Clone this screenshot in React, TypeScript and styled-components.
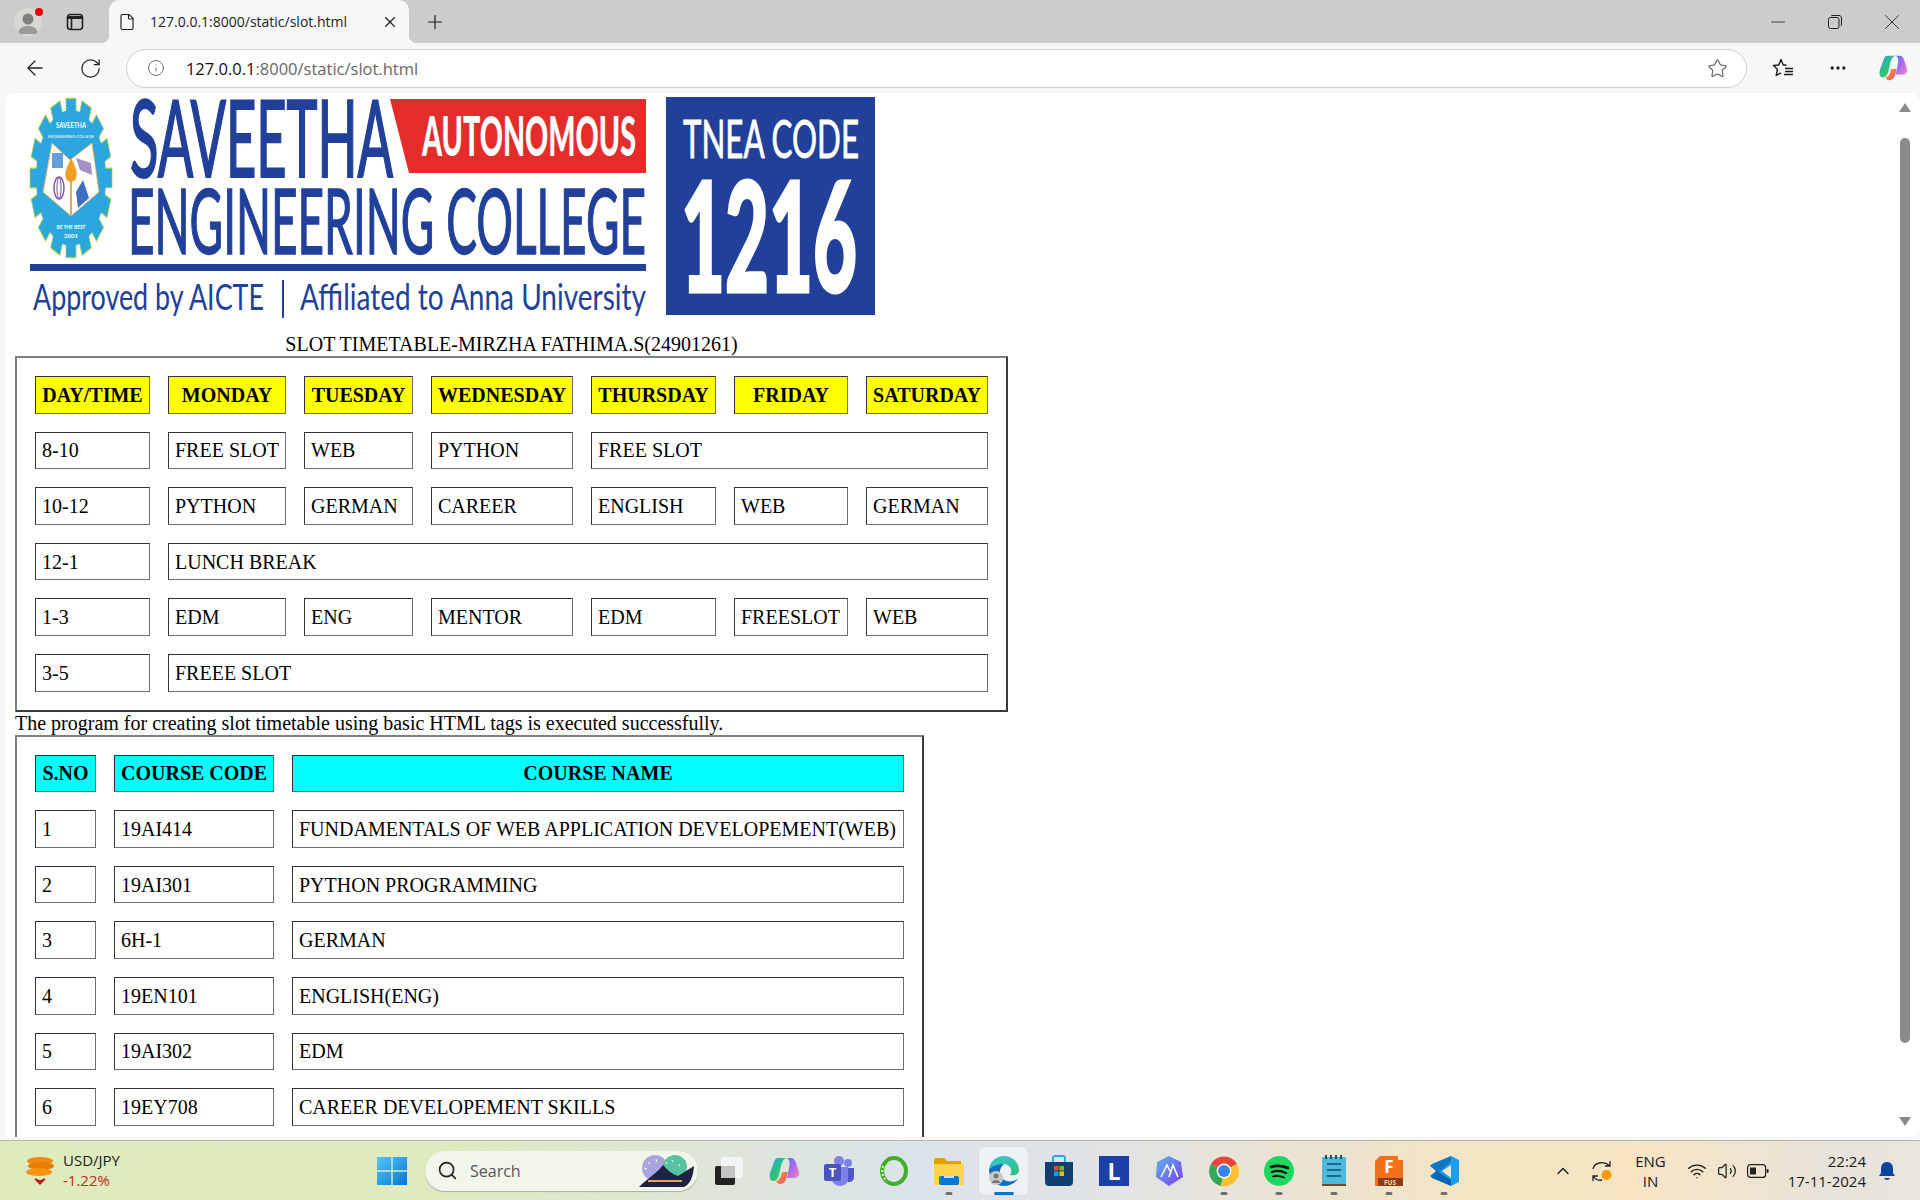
import React from 'react';
import styled, { createGlobalStyle } from 'styled-components';
import { ArrowLeft, ChevronUp, Ellipsis, File, Info, Minus, Plus, RotateCw, Search, Star, Volume2, Wifi, X } from 'lucide-react';

const GlobalStyle = createGlobalStyle`
  html, body {
    margin: 0;
    padding: 0;
    overflow: hidden;
    background: #f7f7f7;
  }
`;

const Screen = styled.div`
  display: flex;
  flex-direction: column;
  width: 1920px;
  height: 1200px;
  overflow: hidden;
  font-family: 'Open Sans', 'Noto Sans', sans-serif;
  background: #f7f7f7;
`;

const TabStrip = styled.div`
  display: flex;
  align-items: center;
  flex: none;
  height: 43px;
  padding-left: 14px;
  background: #cccccc;
  color: #1a1a1a;
`;

const Profile = styled.div`
  position: relative;
  display: flex;
  width: 28px;
  height: 28px;
  border-radius: 50%;
  overflow: hidden;
`;

const ProfileDot = styled.span`
  position: absolute;
  left: 21px;
  top: 0;
  width: 8px;
  height: 8px;
  border-radius: 50%;
  background: #e3000f;
`;

const ProfileSlot = styled.div`
  position: relative;
  width: 52px;
`;

const SidebarButton = styled.div`
  display: flex;
  width: 43px;
  color: #222;
`;

const Tab = styled.div`
  position: relative;
  display: flex;
  align-items: center;
  align-self: stretch;
  width: 300px;
  padding: 0 10px 0 9px;
  box-sizing: border-box;
  background: #f7f7f7;
  border-radius: 10px 10px 0 0;

  &::before,
  &::after {
    content: '';
    position: absolute;
    bottom: 0;
    width: 8px;
    height: 8px;
  }

  &::before {
    left: -8px;
    background: radial-gradient(circle at 0 0, #cccccc 8px, #f7f7f7 8.5px);
  }

  &::after {
    right: -8px;
    background: radial-gradient(circle at 100% 0, #cccccc 8px, #f7f7f7 8.5px);
  }
`;

const TabTitle = styled.span`
  flex: 1;
  margin-left: 14px;
  font-size: 14px;
  color: #222;
  white-space: nowrap;
`;

const NewTab = styled.div`
  display: flex;
  margin-left: 15px;
  flex: 1;
`;

const WindowControls = styled.div`
  display: flex;
  align-items: center;
  color: #222;
`;

const WindowControl = styled.div`
  display: flex;
  align-items: center;
  justify-content: center;
  width: 57px;
`;

const Toolbar = styled.div`
  display: flex;
  align-items: center;
  flex: none;
  height: 50px;
  padding-left: 23px;
  color: #222;
`;

const NavButton = styled.div`
  display: flex;
  width: 56px;
`;

const AddressBar = styled.div`
  display: flex;
  align-items: center;
  width: 1623px;
  height: 39px;
  margin-left: -9px;
  padding: 0 18px 0 20px;
  box-sizing: border-box;
  background: #fff;
  border: 1px solid #cfcfcf;
  border-radius: 20px;
`;

const Url = styled.div`
  flex: 1;
  margin-left: 21px;
  font-size: 16.5px;
  color: #666;
`;

const UrlHost = styled.span`
  color: #111;
`;

const ToolbarActions = styled.div`
  display: flex;
  align-items: center;
  padding-left: 8px;
`;

const ActionSlot = styled.div`
  display: flex;
  align-items: center;
  justify-content: center;
  width: 55px;
`;

const Viewport = styled.div`
  display: flex;
  flex: none;
  height: 1044px;
  margin-left: 5px;
  margin-bottom: 3px;
  overflow: hidden;
  background: #fff;
  border-radius: 10px 10px 10px 0;
`;

const Page = styled.div`
  flex: 1;
  padding-left: 10px;
  overflow: hidden;
  font-family: 'Liberation Serif', serif;
  font-size: 20px;
  color: #000;
`;

const Logo = styled.svg`
  display: block;
`;

const Sheet = styled.table<{ $width: number }>`
  width: ${(p) => p.$width}px;
  table-layout: fixed;
  border-collapse: separate;
  border-spacing: 18px;
  border-width: 2px;
  border-style: solid;
  border-color: #808080 #3a3a3a #3a3a3a #808080;
  box-sizing: border-box;
`;

const SheetCaption = styled.caption`
  height: 23px;
  line-height: 23px;
  white-space: nowrap;
`;

const Cell = styled.td<{ $fill?: string }>`
  height: 37.6px;
  padding: 1px 6px 0;
  box-sizing: border-box;
  border-width: 1px;
  border-style: solid;
  border-color: #333 #6e6e6e #6e6e6e #333;
  background: ${(p) => p.$fill || 'transparent'};
  line-height: 23px;
  white-space: nowrap;
`;

const HeadCell = styled(Cell).attrs({ as: 'th' })`
  font-weight: bold;
  text-align: center;
`;

const Note = styled.div`
  height: 23px;
  line-height: 23px;
`;

const Scrollbar = styled.div`
  position: relative;
  flex: none;
  width: 27px;
  background: #fff;
`;

const ScrollThumb = styled.div`
  position: absolute;
  left: 7px;
  top: 45px;
  width: 10px;
  height: 905px;
  border-radius: 5px;
  background: #8a8a8a;
`;

const ScrollArrow = styled.div<{ $down?: boolean }>`
  position: absolute;
  left: 6px;
  ${(p) => (p.$down ? 'bottom: 11px;' : 'top: 10px;')}
  width: 0;
  height: 0;
  border-left: 6px solid transparent;
  border-right: 6px solid transparent;
  ${(p) => (p.$down ? 'border-top: 9px solid #8a8a8a;' : 'border-bottom: 9px solid #8a8a8a;')}
`;

const Taskbar = styled.div`
  display: flex;
  align-items: center;
  flex: none;
  height: 60px;
  box-sizing: border-box;
  border-top: 1px solid #b5b8a8;
  background: linear-gradient(90deg, #deecbc 0%, #dfeabf 22%, #dce3ea 48%, #e1e3e4 58%, #f3e4c3 76%, #f6e4c4 86%, #e8e3da 95%, #e9e5dc 100%);
  color: #1a1a1a;
`;

const Widget = styled.div`
  display: flex;
  align-items: center;
  width: 377px;
  padding-left: 26px;
  box-sizing: border-box;
`;

const WidgetText = styled.div`
  margin-left: 9px;
  font-size: 15px;
  line-height: 20px;
  margin-top: -2px;
`;

const WidgetChange = styled.div`
  color: #c8261e;
`;

const TaskCenter = styled.div`
  display: flex;
  align-items: center;
`;

const SearchBox = styled.div`
  display: flex;
  align-items: center;
  width: 273px;
  height: 40px;
  margin-left: 18px;
  margin-right: 3px;
  padding: 0 2px 0 12px;
  box-sizing: border-box;
  background: #f2f6ea;
  border-radius: 20px;
  box-shadow: 0 1px 1px #a9ac9f;
  font-size: 16px;
  color: #555;
`;

const SearchLabel = styled.span`
  flex: 1;
  margin-left: 12px;
`;

const TaskTile = styled.div<{ $active?: boolean }>`
  position: relative;
  display: flex;
  align-items: center;
  justify-content: center;
  width: 49px;
  height: 48px;
  margin: 0 3px;
  border-radius: 5px;
  background: ${(p) => (p.$active ? '#edf1f3' : 'transparent')};
  box-shadow: ${(p) => (p.$active ? '0 0 1px #bbb' : 'none')};
`;

const RunDot = styled.span<{ $active?: boolean }>`
  position: absolute;
  left: 50%;
  bottom: 0;
  width: ${(p) => (p.$active ? '20px' : '7px')};
  height: 3px;
  transform: translateX(-50%);
  border-radius: 2px;
  background: ${(p) => (p.$active ? '#0a73d1' : '#6f6f6f')};
`;

const Tray = styled.div`
  display: flex;
  align-items: center;
  margin-left: auto;
  padding-right: 24px;
`;

const TraySpacer = styled.span`
  width: 18px;
`;

const TrayLang = styled.div`
  margin: 0 21px 0 20px;
  font-size: 15px;
  line-height: 20px;
  text-align: center;
`;

const TrayIcons = styled.div`
  display: flex;
  align-items: center;
  gap: 10px;
`;

const Clock = styled.div`
  margin: 0 12px 0 19px;
  font-size: 15px;
  line-height: 20px;
  text-align: right;
`;

const slotRows: { text: string; span?: number }[][] = [
  [{ text: '8-10' }, { text: 'FREE SLOT' }, { text: 'WEB' }, { text: 'PYTHON' }, { text: 'FREE SLOT', span: 3 }],
  [{ text: '10-12' }, { text: 'PYTHON' }, { text: 'GERMAN' }, { text: 'CAREER' }, { text: 'ENGLISH' }, { text: 'WEB' }, { text: 'GERMAN' }],
  [{ text: '12-1' }, { text: 'LUNCH BREAK', span: 6 }],
  [{ text: '1-3' }, { text: 'EDM' }, { text: 'ENG' }, { text: 'MENTOR' }, { text: 'EDM' }, { text: 'FREESLOT' }, { text: 'WEB' }],
  [{ text: '3-5' }, { text: 'FREEE SLOT', span: 6 }],
];

const slotHead = ['DAY/TIME', 'MONDAY', 'TUESDAY', 'WEDNESDAY', 'THURSDAY', 'FRIDAY', 'SATURDAY'];
const slotCols = [115, 118, 109, 142, 125, 114, 122];

const courseHead = ['S.NO', 'COURSE CODE', 'COURSE NAME'];
const courseCols = [61, 160, 612];
const courses = [
  ['1', '19AI414', 'FUNDAMENTALS OF WEB APPLICATION DEVELOPEMENT(WEB)'],
  ['2', '19AI301', 'PYTHON PROGRAMMING'],
  ['3', '6H-1', 'GERMAN'],
  ['4', '19EN101', 'ENGLISH(ENG)'],
  ['5', '19AI302', 'EDM'],
  ['6', '19EY708', 'CAREER DEVELOPEMENT SKILLS'],
];

const blue = '#21409a';

// The logo lettering is tall and condensed, so each line is stretched upwards from a font size that fits its width.
type LogoTextProps = { x: number; y: number; w: number; size: number; stretch: number; fill: string; weight?: number; bold?: number; children: string };

const LogoText = ({ x, y, w, size, stretch, fill, weight = 400, bold = 0, children }: LogoTextProps) => (
  <text
    transform={`translate(${x} ${y}) scale(1 ${stretch})`}
    fontSize={size}
    fontWeight={weight}
    fill={fill}
    stroke={bold ? fill : 'none'}
    strokeWidth={bold}
    textLength={w}
    lengthAdjust="spacingAndGlyphs"
  >
    {children}
  </text>
);

const Emblem = () => {
  const teeth = Array.from({ length: 16 }, (_, i) => (i * 360) / 16);
  return (
    <g>
      <g transform="translate(71 178) scale(1 1.94)">
        {teeth.map((a) => (
          <rect key={a} x={-5} y={-41} width={10} height={12} fill="#2ba6de" stroke="#a9cf45" strokeWidth={0.7} transform={`rotate(${a})`} />
        ))}
        <circle r={35} fill="#2ba6de" />
      </g>
      <polygon points="52,143 70,160 92,143 99,192 71,216 43,192" fill="#fff" stroke="#f2a93b" strokeWidth={0.8} />
      <rect x={52} y={153} width={11} height={15} fill="#3f86d2" opacity={0.8} />
      <ellipse cx={59} cy={188} rx={5} ry={11} fill="none" stroke="#7c4fa8" strokeWidth={1.4} />
      <ellipse cx={59} cy={188} rx={2} ry={11} fill="none" stroke="#7c4fa8" strokeWidth={1} />
      <polygon points="76,158 91,163 92,175 80,170" fill="#8a76b8" opacity={0.8} />
      <polygon points="83,180 89,198 78,208 76,192" fill="#3f6fc0" />
      <rect x={70} y={180} width={2} height={36} fill="#d8b24a" />
      <path d="M71 158 C76 168 78 172 76 178 C75 183 67 183 66 178 C64 172 67 168 71 158 Z" fill="#f29f1f" />
      <text x={71} y={128} textAnchor="middle" fontSize={7} fontWeight={700} fill="#fff" textLength={30} lengthAdjust="spacingAndGlyphs">SAVEETHA</text>
      <text x={71} y={138} textAnchor="middle" fontSize={4.5} fill="#fff" textLength={46} lengthAdjust="spacingAndGlyphs">ENGINEERING COLLEGE</text>
      <text x={71} y={229} textAnchor="middle" fontSize={6} fontWeight={700} fill="#fff" textLength={29} lengthAdjust="spacingAndGlyphs">BE THE BEST</text>
      <text x={71} y={238} textAnchor="middle" fontSize={6} fontWeight={700} fill="#fff">2001</text>
    </g>
  );
};

const CollegeLogo = () => (
  <Logo width={880} height={240} viewBox="15 93 880 240" fontFamily="Lato, sans-serif">
    <Emblem />
    <polygon points="390,99 646,99 646,173 409,173" fill="#e42d2a" />
    <LogoText x={130} y={177} w={263} size={50} stretch={2.15} fill={blue} bold={1}>SAVEETHA</LogoText>
    <LogoText x={422} y={156} w={214} size={29} stretch={1.87} fill="#fff" weight={900}>AUTONOMOUS</LogoText>
    <LogoText x={128} y={254} w={518} size={41} stretch={2.2} fill={blue} bold={0.7}>ENGINEERING COLLEGE</LogoText>
    <rect x={30} y={264} width={616} height={7} fill={blue} />
    <LogoText x={33} y={310} w={231} size={26} stretch={1.44} fill={blue}>Approved by AICTE</LogoText>
    <rect x={282} y={280} width={2} height={38} fill={blue} />
    <LogoText x={300} y={310} w={346} size={25} stretch={1.5} fill={blue}>Affiliated to Anna University</LogoText>
    <rect x={666} y={97} width={209} height={218} fill={blue} />
    <LogoText x={683} y={158} w={176} size={30} stretch={1.76} fill="#fff" bold={0.5}>TNEA CODE</LogoText>
    <LogoText x={681} y={292} w={176} size={74} stretch={2.05} fill="#fff" weight={900} bold={1.5}>1216</LogoText>
  </Logo>
);

const CopilotIcon = ({ size, id }: { size: number; id: string }) => (
  <svg width={size} height={size} viewBox="0 0 32 32">
    <defs>
      <linearGradient id={`${id}a`} x1="0" y1="0" x2="1" y2="1">
        <stop offset="0" stopColor="#1fa5ee" />
        <stop offset="0.6" stopColor="#35c56a" />
        <stop offset="1" stopColor="#f4d135" />
      </linearGradient>
      <linearGradient id={`${id}b`} x1="0" y1="0" x2="1" y2="1">
        <stop offset="0" stopColor="#4a7bf0" />
        <stop offset="0.5" stopColor="#b46be8" />
        <stop offset="1" stopColor="#f08ac0" />
      </linearGradient>
      <linearGradient id={`${id}c`} x1="0" y1="0" x2="1" y2="1">
        <stop offset="0" stopColor="#f7a03c" />
        <stop offset="1" stopColor="#ee4d5f" />
      </linearGradient>
    </defs>
    <path d="M10 3 H19 C15 4 14 7 13 11 L11 20 C10 24 8 26 5 26 C2 26 1 22 2 18 L6 7 C7 4 8 3 10 3 Z" fill={`url(#${id}a)`} />
    <path d="M19 3 H23 C26 3 27 5 28 8 L31 17 C32 21 29 23 26 23 H19 L21 13 C22 8 22 5 19 3 Z" fill={`url(#${id}b)`} />
    <path d="M12 29 C10 29 9 28 8 26 C10 26 12 24 13 21 L14 17 H20 L18 24 C17 27 15 29 12 29 Z" fill={`url(#${id}c)`} />
  </svg>
);

const SidebarIcon = () => (
  <svg width={18} height={18} viewBox="0 0 18 18" fill="none" stroke="currentColor" strokeWidth={1.6}>
    <rect x={1.5} y={1.5} width={15} height={15} rx={3} />
    <path d="M1.5 4.5 H16.5" strokeWidth={3} />
    <path d="M5.5 6 V16.5" />
  </svg>
);

const ProfileIcon = () => (
  <svg width={28} height={28} viewBox="0 0 28 28">
    <circle cx={14} cy={14} r={14} fill="#d8d8d4" />
    <circle cx={14} cy={11} r={5.5} fill="#7f7f7c" />
    <path d="M4 26 C5 19 10 18 14 18 C18 18 23 19 24 26 Z" fill="#9a9a96" />
  </svg>
);

const RestoreIcon = () => (
  <svg width={14} height={14} viewBox="0 0 14 14" fill="none" stroke="#222" strokeWidth={1}>
    <rect x={0.5} y={2.5} width={10.5} height={11} rx={2} />
    <path d="M3 1 C3.5 .6 4 .5 5 .5 H11 C12.5 .5 13.5 1.5 13.5 3 V9 C13.5 10 13 11 12.5 11" />
  </svg>
);

const FavoritesIcon = () => (
  <svg width={22} height={20} viewBox="0 0 22 20" fill="none" stroke="#1a1a1a" strokeWidth={1.4} strokeLinejoin="round">
    <path d="M14.5 7 H11.2 L9 1.5 L6.8 7 L1.5 7.5 L5.5 11.5 L4.2 17.5 L9 14.8" />
    <path d="M13 10.5 H21 M13 13.5 H21 M12 16.5 H21" />
  </svg>
);

const CoinsIcon = () => (
  <svg width={28} height={30} viewBox="0 0 28 30">
    <ellipse cx={14} cy={5} rx={13} ry={4} fill="#f08a0c" />
    <ellipse cx={15} cy={10} rx={13} ry={4} fill="#e67e06" />
    <ellipse cx={13} cy={16} rx={13} ry={4} fill="#f59312" />
    <path d="M9 23 L14 28 L19 23 L14 25 Z" fill="#b8261a" stroke="#b8261a" strokeWidth={1.5} />
  </svg>
);

const WindowsIcon = () => (
  <svg width={30} height={30} viewBox="0 0 30 30">
    <defs>
      <linearGradient id="winA" x1="0" y1="0" x2="1" y2="1">
        <stop offset="0" stopColor="#54c7fb" />
        <stop offset="1" stopColor="#0078d4" />
      </linearGradient>
    </defs>
    <path d="M0 1 H14.3 V14.3 H0 Z M15.7 1 H30 V14.3 H15.7 Z M0 15.7 H14.3 V29 H0 Z M15.7 15.7 H30 V29 H15.7 Z" fill="url(#winA)" />
  </svg>
);

const SearchArt = () => (
  <svg width={60} height={34} viewBox="0 0 60 34">
    <circle cx={19} cy={14} r={13} fill="#a9a6df" />
    <circle cx={39} cy={13} r={12} fill="#58c2a2" />
    <g stroke="#fff" strokeWidth={1}>
      <path d="M12 8 l2 2 M20 5 l1 3 M30 8 l1 2 M36 6 l1 2 M44 10 l-1 2 M8 14 l3 1" />
    </g>
    <path d="M3 33 C12 24 20 20 27 11 C31 16 36 20 42 22 L58 12 C57 24 54 30 48 33 Z" fill="#1f2340" />
    <path d="M12 27 H46" stroke="#e5a55c" strokeWidth={2} />
  </svg>
);

const TaskViewIcon = () => (
  <svg width={30} height={30} viewBox="0 0 30 30">
    <rect x={7} y={1} width={22} height={21} rx={2} fill="#f4f4f4" />
    <rect x={1} y={10} width={20} height={19} rx={2} fill="#222" />
    <rect x={7} y={10} width={14} height={12} fill="#c4c4c4" />
  </svg>
);

const TeamsIcon = () => (
  <svg width={32} height={32} viewBox="0 0 32 32">
    <circle cx={25} cy={8} r={4} fill="#7b83eb" />
    <circle cx={16} cy={6} r={5} fill="#7b83eb" />
    <path d="M21 13 H31 V22 C31 26 28 27 26 27 C24 27 21 26 21 22 Z" fill="#5059c9" />
    <path d="M9 12 H25 V24 C25 29 20 31 17 31 C13 31 9 28 9 24 Z" fill="#7b83eb" />
    <rect x={1} y={9} width={17} height={17} rx={2} fill="#4b53bc" />
    <text x={9.5} y={22} textAnchor="middle" fontSize={13} fontWeight={700} fill="#fff" fontFamily="'Open Sans', sans-serif">T</text>
  </svg>
);

const RingIcon = () => (
  <svg width={30} height={32} viewBox="0 0 30 32">
    <ellipse cx={15} cy={16} rx={12} ry={13} fill="none" stroke="#43b02a" strokeWidth={4} />
    <path d="M4 11 A12 13 0 0 0 8 26" fill="none" stroke="#eaf2e0" strokeWidth={2} strokeDasharray="2 2" />
  </svg>
);

const FolderIcon = () => (
  <svg width={32} height={32} viewBox="0 0 32 32">
    <path d="M1 6 C1 4 2 3 3 3 H11 L14 6 H28 V12 H1 Z" fill="#e0a100" />
    <path d="M1 9 H31 V30 H1 Z" fill="#ffd34e" />
    <rect x={6} y={21} width={20} height={9} rx={2} fill="#0a78d0" />
    <rect x={11} y={21} width={10} height={2} fill="#bfe1fb" />
  </svg>
);

const EdgeIcon = () => (
  <svg width={32} height={32} viewBox="0 0 32 32">
    <defs>
      <linearGradient id="edgeA" x1="0" y1="0" x2="1" y2="1">
        <stop offset="0" stopColor="#36c6d8" />
        <stop offset="1" stopColor="#2fc27a" />
      </linearGradient>
    </defs>
    <path d="M1 14 C2 6 9 1 16 1 C25 1 31 8 31 15 C31 20 26 21 22 20 C25 16 23 10 16 9 C9 9 4 11 1 14 Z" fill="url(#edgeA)" />
    <path d="M1 14 C1 23 7 31 16 31 C22 31 27 28 30 24 C24 28 16 27 13 22 C10 17 13 11 16 9 C9 9 4 11 1 14 Z" fill="#0c70c7" />
    <circle cx={8} cy={23} r={7} fill="#c9c9c7" />
    <circle cx={8} cy={21} r={2.5} fill="#777" />
    <path d="M3.5 28 C4 24 12 24 12.5 28 Z" fill="#777" />
  </svg>
);

const StoreIcon = () => (
  <svg width={30} height={32} viewBox="0 0 30 32">
    <path d="M9 8 V3 C9 2 10 1 11 1 H19 C20 1 21 2 21 3 V8" fill="none" stroke="#29a9e0" strokeWidth={2} />
    <path d="M1 7 H29 V27 C29 30 27 31 25 31 H5 C3 31 1 30 1 27 Z" fill="#123f72" />
    <rect x={10} y={11} width={4.5} height={4.5} fill="#f25022" />
    <rect x={15.5} y={11} width={4.5} height={4.5} fill="#7fba00" />
    <rect x={10} y={16.5} width={4.5} height={4.5} fill="#00a4ef" />
    <rect x={15.5} y={16.5} width={4.5} height={4.5} fill="#ffb900" />
  </svg>
);

const LetterIcon = () => (
  <svg width={30} height={30} viewBox="0 0 30 30">
    <rect width={30} height={30} fill="#1c3fa8" />
    <text x={15} y={24} textAnchor="middle" fontSize={23} fontWeight={700} fill="#fff" fontFamily="'Open Sans', sans-serif">L</text>
  </svg>
);

const ArcIcon = () => (
  <svg width={30} height={32} viewBox="0 0 30 32">
    <defs>
      <linearGradient id="arcA" x1="0" y1="0" x2="1" y2="1">
        <stop offset="0" stopColor="#5ab5ef" />
        <stop offset="1" stopColor="#7a3ff0" />
      </linearGradient>
    </defs>
    <path d="M15 1 L27 7 L29 22 L15 31 L2 22 L3 7 Z" fill="url(#arcA)" />
    <path d="M7 22 L13 10 L16 16 M15 22 L19 10 L24 22" fill="none" stroke="#fff" strokeWidth={1.6} />
  </svg>
);

const ChromeIcon = () => (
  <svg width={32} height={32} viewBox="0 0 32 32">
    <path d="M16 16 L3 9 A15 15 0 0 1 29 9 Z" fill="#e8453c" />
    <path d="M16 16 L3 9 A15 15 0 0 0 13 31 Z" fill="#34a853" />
    <path d="M16 16 L29 9 A15 15 0 0 1 13 31 Z" fill="#fbc02d" />
    <circle cx={16} cy={16} r={7.5} fill="#fff" />
    <circle cx={16} cy={16} r={6} fill="#3b82e8" />
  </svg>
);

const SpotifyIcon = () => (
  <svg width={30} height={30} viewBox="0 0 30 30" fill="none" stroke="#111" strokeLinecap="round">
    <circle cx={15} cy={15} r={15} fill="#1ed760" stroke="none" />
    <path d="M7 11 C13 9 19 10 24 12" strokeWidth={2.6} />
    <path d="M8 16 C13 14 18 15 22 17" strokeWidth={2.2} />
    <path d="M9 20.5 C13 19 17 20 20 21.5" strokeWidth={1.8} />
  </svg>
);

const NotepadIcon = () => (
  <svg width={26} height={32} viewBox="0 0 26 32">
    <rect x={1} y={2} width={24} height={27} rx={1} fill="#4fb9dc" />
    <rect x={1} y={29} width={24} height={2} fill="#6e4a2a" />
    <path d="M6 9 H20 M6 15 H20 M6 21 H20" stroke="#156a92" strokeWidth={2} />
    <path d="M5 0 V4 M10 0 V4 M15 0 V4 M20 0 V4" stroke="#1d4f70" strokeWidth={2} />
  </svg>
);

const FusIcon = () => (
  <svg width={28} height={32} viewBox="0 0 28 32">
    <path d="M5 1 H23 V5 H28 V31 H0 V6 Z" fill="#f26f1c" />
    <rect x={3} y={23} width={25} height={8} fill="#8a3c12" />
    <text x={14} y={18} textAnchor="middle" fontSize={17} fontWeight={700} fill="#fff" fontFamily="'Open Sans', sans-serif">F</text>
    <text x={15} y={30} textAnchor="middle" fontSize={6.5} fontWeight={700} fill="#f4d8bf" fontFamily="'Open Sans', sans-serif">FUS</text>
  </svg>
);

const VsCodeIcon = () => (
  <svg width={30} height={32} viewBox="0 0 30 32">
    <path d="M22 1 L30 5 V27 L22 31 L8 17 L22 7 Z M22 10 L13 16 L22 23 Z" fill="#1f9cf0" fillRule="evenodd" />
    <path d="M3 9 L1 11 L7 16 L1 21 L3 23 L22 7 V1 Z" fill="#0f78c4" />
    <path d="M3 23 L22 31 V25 L8 16 Z" fill="#0a66ab" />
  </svg>
);

const SyncIcon = () => (
  <svg width={24} height={24} viewBox="0 0 24 24" fill="none" stroke="#222" strokeWidth={1.3}>
    <path d="M2 10 C3 4 12 1 19 7 M19 2 V7 H14" />
    <path d="M11 21 C7 22 4 20 2 17 M2 22 V17 H7" />
    <circle cx={15.5} cy={16} r={5} fill="#f59a0c" stroke="none" />
  </svg>
);

const BatteryIcon = () => (
  <svg width={22} height={14} viewBox="0 0 22 14" fill="none" stroke="#222" strokeWidth={1.2}>
    <rect x={0.6} y={0.6} width={18} height={12.8} rx={3} />
    <rect x={3} y={3.5} width={6} height={7} fill="#222" stroke="none" />
    <rect x={19.6} y={5} width={2} height={4} rx={1} fill="#222" stroke="none" />
  </svg>
);

const BellIcon = () => (
  <svg width={18} height={20} viewBox="0 0 18 20">
    <path d="M9 1 C13 1 15 4 15 8 V12 L17 15 H1 L3 12 V8 C3 4 5 1 9 1 Z" fill="#0a45a0" />
    <path d="M6 17 H12 C11 19.5 7 19.5 6 17 Z" fill="#0a45a0" />
  </svg>
);

const taskIcons: { icon: React.ReactNode; running?: boolean; active?: boolean }[] = [
  { icon: <TaskViewIcon /> },
  { icon: <CopilotIcon size={32} id="taskCopilot" /> },
  { icon: <TeamsIcon /> },
  { icon: <RingIcon /> },
  { icon: <FolderIcon />, running: true },
  { icon: <EdgeIcon />, running: true, active: true },
  { icon: <StoreIcon /> },
  { icon: <LetterIcon /> },
  { icon: <ArcIcon /> },
  { icon: <ChromeIcon />, running: true },
  { icon: <SpotifyIcon />, running: true },
  { icon: <NotepadIcon />, running: true },
  { icon: <FusIcon />, running: true },
  { icon: <VsCodeIcon />, running: true },
];

const App: React.FC = () => (
  <Screen>
    <GlobalStyle />
    <TabStrip>
      <ProfileSlot>
        <Profile>
          <ProfileIcon />
        </Profile>
        <ProfileDot />
      </ProfileSlot>
      <SidebarButton>
        <SidebarIcon />
      </SidebarButton>
      <Tab>
        <File size={18} strokeWidth={1.5} />
        <TabTitle>127.0.0.1:8000/static/slot.html</TabTitle>
        <X size={18} strokeWidth={1.5} />
      </Tab>
      <NewTab>
        <Plus size={22} strokeWidth={1.3} />
      </NewTab>
      <WindowControls>
        <WindowControl>
          <Minus size={22} strokeWidth={0.9} />
        </WindowControl>
        <WindowControl>
          <RestoreIcon />
        </WindowControl>
        <WindowControl>
          <X size={26} strokeWidth={0.8} />
        </WindowControl>
      </WindowControls>
    </TabStrip>

    <Toolbar>
      <NavButton>
        <ArrowLeft size={24} strokeWidth={1.3} />
      </NavButton>
      <NavButton>
        <RotateCw size={23} strokeWidth={1.3} />
      </NavButton>
      <AddressBar>
        <Info size={18} strokeWidth={1.1} color="#555" />
        <Url>
          <UrlHost>127.0.0.1</UrlHost>:8000/static/slot.html
        </Url>
        <Star size={21} strokeWidth={1.3} color="#666" />
      </AddressBar>
      <ToolbarActions>
        <ActionSlot>
          <FavoritesIcon />
        </ActionSlot>
        <ActionSlot>
          <Ellipsis size={20} strokeWidth={2} />
        </ActionSlot>
        <ActionSlot>
          <CopilotIcon size={30} id="barCopilot" />
        </ActionSlot>
      </ToolbarActions>
    </Toolbar>

    <Viewport>
      <Page>
        <CollegeLogo />
        <Sheet $width={993}>
          <SheetCaption>SLOT TIMETABLE-MIRZHA FATHIMA.S(24901261)</SheetCaption>
          <colgroup>
            {slotCols.map((w, i) => (
              <col key={i} style={{ width: w }} />
            ))}
          </colgroup>
          <tbody>
            <tr>
              {slotHead.map((h) => (
                <HeadCell key={h} $fill="#ffff00">{h}</HeadCell>
              ))}
            </tr>
            {slotRows.map((row, i) => (
              <tr key={i}>
                {row.map((c, j) => (
                  <Cell key={j} colSpan={c.span}>{c.text}</Cell>
                ))}
              </tr>
            ))}
          </tbody>
        </Sheet>
        <Note>The program for creating slot timetable using basic HTML tags is executed successfully.</Note>
        <Sheet $width={909}>
          <colgroup>
            {courseCols.map((w, i) => (
              <col key={i} style={{ width: w }} />
            ))}
          </colgroup>
          <tbody>
            <tr>
              {courseHead.map((h) => (
                <HeadCell key={h} $fill="#00ffff">{h}</HeadCell>
              ))}
            </tr>
            {courses.map((row) => (
              <tr key={row[0]}>
                {row.map((c, j) => (
                  <Cell key={j}>{c}</Cell>
                ))}
              </tr>
            ))}
          </tbody>
        </Sheet>
      </Page>
      <Scrollbar>
        <ScrollArrow />
        <ScrollThumb />
        <ScrollArrow $down />
      </Scrollbar>
    </Viewport>

    <Taskbar>
      <Widget>
        <CoinsIcon />
        <WidgetText>
          <div>USD/JPY</div>
          <WidgetChange>-1.22%</WidgetChange>
        </WidgetText>
      </Widget>
      <TaskCenter>
        <WindowsIcon />
        <SearchBox>
          <Search size={21} strokeWidth={1.8} color="#222" />
          <SearchLabel>Search</SearchLabel>
          <SearchArt />
        </SearchBox>
        {taskIcons.map((t, i) => (
          <TaskTile key={i} $active={t.active}>
            {t.icon}
            {t.running && <RunDot $active={t.active} />}
          </TaskTile>
        ))}
      </TaskCenter>
      <Tray>
        <ChevronUp size={20} strokeWidth={1.6} />
        <TraySpacer />
        <SyncIcon />
        <TrayLang>
          ENG
          <br />
          IN
        </TrayLang>
        <TrayIcons>
          <Wifi size={20} strokeWidth={1.6} />
          <Volume2 size={20} strokeWidth={1.4} />
          <BatteryIcon />
        </TrayIcons>
        <Clock>
          22:24
          <br />
          17-11-2024
        </Clock>
        <BellIcon />
      </Tray>
    </Taskbar>
  </Screen>
);

export default App;
